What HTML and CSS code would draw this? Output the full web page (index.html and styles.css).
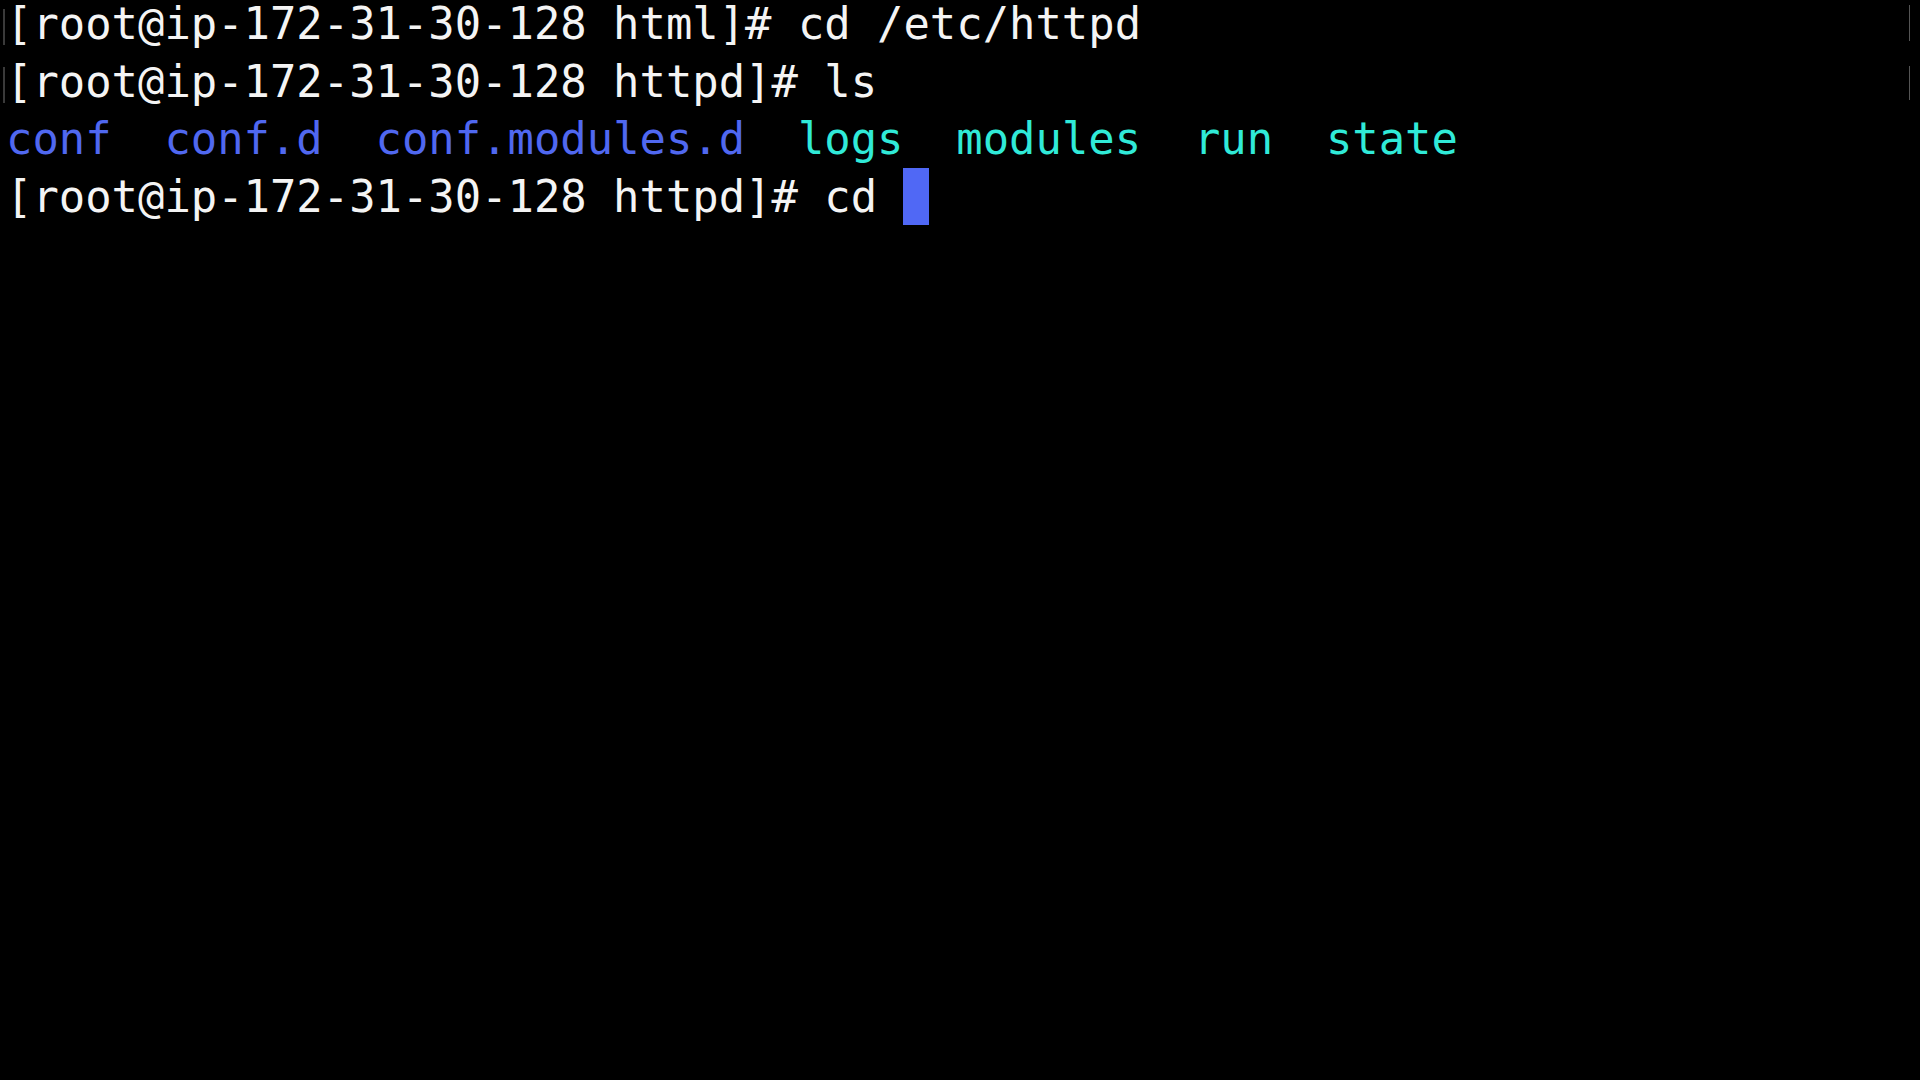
FILE: index.html
```html
<!DOCTYPE html>
<html>
<head>
<meta charset="utf-8">
<link rel="stylesheet" href="styles.css">
</head>
<body>
<div class="term">
  <div class="line marked"><span class="out">[root@ip-172-31-30-128 html]# cd /etc/httpd</span></div>
  <div class="line marked"><span class="out">[root@ip-172-31-30-128 httpd]# ls</span></div>
  <div class="line"><span class="dir">conf</span>  <span class="dir">conf.d</span>  <span class="dir">conf.modules.d</span>  <span class="cy">logs</span>  <span class="cy">modules</span>  <span class="cy">run</span>  <span class="cy">state</span></div>
  <div class="line"><span class="out">[root@ip-172-31-30-128 httpd]# cd </span><span class="cursor"> </span></div>
</div>
<div class="edge edge-a"></div>
<div class="edge edge-b"></div>
</body>
</html>
```
FILE: styles.css
```css
html, body {
  margin: 0;
  padding: 0;
  background: #000;
  width: 1920px;
  height: 1080px;
  overflow: hidden;
}
.term {
  padding: 0 0 0 6px;
  margin-top: -5px;
  font-family: "DejaVu Sans Mono", "Liberation Mono", monospace;
  font-size: 43.85px;
  line-height: 57.6px;
  color: #f4f4f4;
  position: relative;
}
.line {
  height: 57.6px;
  white-space: pre;
  position: relative;
}
.marked::before {
  content: "";
  position: absolute;
  left: -3px;
  top: 14px;
  width: 2px;
  height: 36px;
  border: 1px solid #3a3a3a;
  box-sizing: border-box;
}
.dir { color: #5068f0; }
.cy { color: #30ead8; }
.cursor {
  display: inline-block;
  width: 26px;
  height: 57px;
  background: #5068f5;
  vertical-align: top;
}
.edge {
  position: absolute;
  right: 8px;
  width: 2px;
  border-left: 1px solid #555;
}
.edge-a { top: 5px; height: 36px; }
.edge-b { top: 66px; height: 34px; }
```
